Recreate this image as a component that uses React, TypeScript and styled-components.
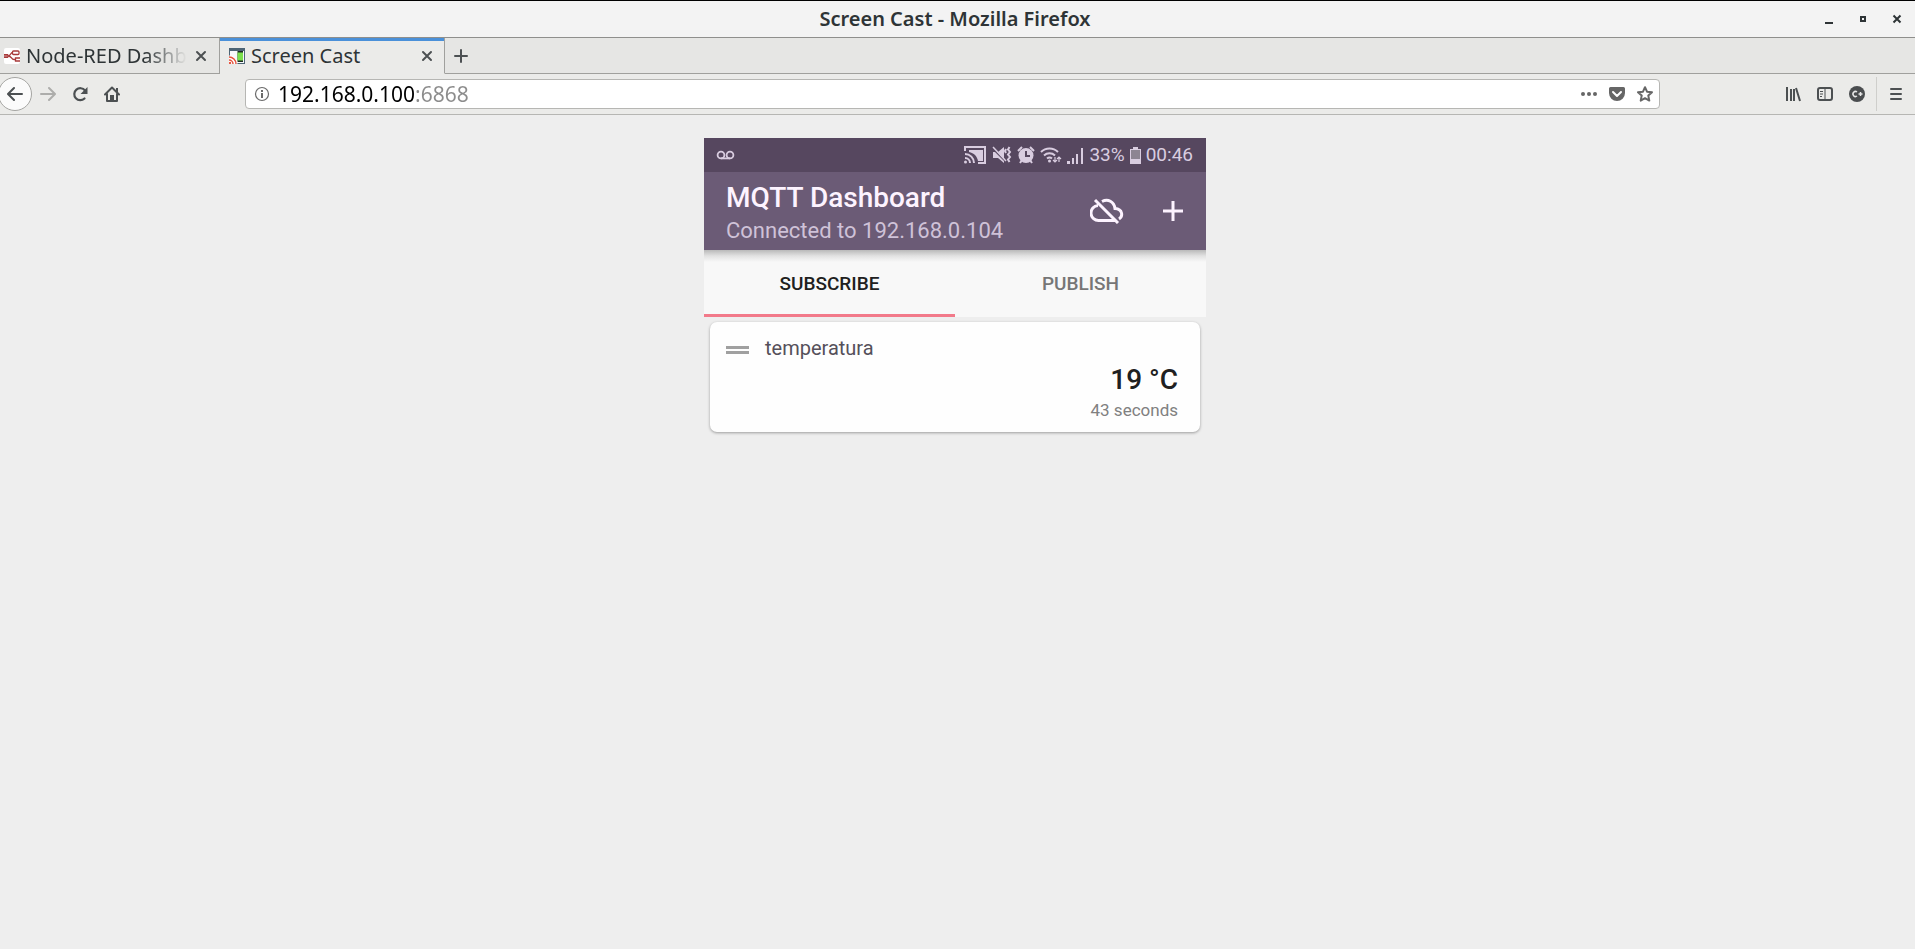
import React from "react";
import styled, { createGlobalStyle, css } from "styled-components";

const GlobalStyle = createGlobalStyle`
  *, *::before, *::after { box-sizing: border-box; }
  body { margin: 0; background: #eeeeee; }
  button, input { font: inherit; color: inherit; }
  button { padding: 0; border: 0; background: none; cursor: pointer; }
  svg { display: block; flex: none; }
`;

const Window = styled.div`
  display: flex;
  flex-direction: column;
  min-height: 100vh;
  background: #eeeeee;
  font-family: "Noto Sans", "Open Sans", sans-serif;
  color: #2e3436;
`;

const TitleBar = styled.header`
  display: grid;
  grid-template-columns: 1fr auto 1fr;
  align-items: center;
  height: 38px;
  padding: 0 10px 0 5px;
  border-top: 1px solid #000000;
  border-bottom: 1px solid #8f8f8c;
  background: #f3f3f3;
`;

const WindowTitle = styled.h1`
  grid-column: 2;
  margin: 0;
  font-size: 20px;
  line-height: 28px;
  font-weight: 600;
`;

const WindowControls = styled.div`
  display: flex;
  justify-content: flex-end;
  gap: 18px;
`;

const IconButton = styled.button<{ $size?: number }>`
  display: flex;
  flex: none;
  align-items: center;
  justify-content: center;
  width: ${({ $size = 16 }) => $size}px;
  height: ${({ $size = 16 }) => $size}px;
`;

const TabStrip = styled.div`
  display: flex;
  height: 36px;
  background: #e6e6e4;
`;

const BrowserTab = styled.div<{ $active?: boolean }>`
  display: flex;
  align-items: center;
  gap: 6px;
  width: ${({ $active }) => ($active ? 225 : 220)}px;
  padding: 0 10px 0 4px;
  border-right: 1px solid #a0a09d;
  border-bottom: 1px solid #a0a09d;
  ${({ $active }) =>
    $active &&
    css`
      padding: 0 9px 0 9px;
      border-bottom-color: transparent;
      background: #ebebe9;
      box-shadow: inset 0 3px #4a90d9;
    `}
`;

const TabLabel = styled.button<{ $fade?: boolean }>`
  flex: 1;
  min-width: 0;
  white-space: nowrap;
  text-align: left;
  font-size: 20px;
  line-height: 28px;
  ${({ $fade }) =>
    $fade &&
    css`
      mask-image: linear-gradient(to right, #000 74%, transparent 100%);
    `}
`;

const StripRest = styled.div`
  display: flex;
  flex: 1;
  align-items: center;
  padding-left: 8px;
  border-bottom: 1px solid #a0a09d;
`;

const Toolbar = styled.nav`
  display: flex;
  align-items: center;
  height: 41px;
  padding-right: 11px;
  border-bottom: 1px solid #b6b6b3;
  background: #ebebe9;
`;

const NavButtons = styled.div`
  display: flex;
  align-items: center;
  gap: 16px;
  width: 245px;
`;

const BackButton = styled(IconButton)`
  width: 34px;
  height: 34px;
  margin-left: -2px;
  margin-right: -8px;
  border: 1px solid #a5a5a2;
  border-radius: 50%;
  background: #fbfbfb;
`;

const AddressBar = styled.div`
  display: flex;
  flex: 1;
  align-items: center;
  gap: 12px;
  height: 30px;
  padding: 0 6px 0 8px;
  border: 1px solid #b6b6b3;
  border-radius: 4px;
  background: #ffffff;
`;

const AddressInput = styled.input`
  flex: 1;
  min-width: 0;
  height: 28px;
  margin-left: -4px;
  padding: 0;
  border: 0;
  outline: 0;
  background: linear-gradient(to right, #000000 138px, #8c8c8c 138px);
  background-clip: text;
  -webkit-text-fill-color: transparent;
  caret-color: #000000;
  font-size: 21px;
  line-height: 28px;
`;

const ToolButtons = styled.div`
  display: flex;
  align-items: center;
  justify-content: flex-end;
  gap: 16px;
  width: 244px;
`;

const Divider = styled.span`
  width: 1px;
  height: 34px;
  margin: 0 -5px;
  background: #cfcfcc;
`;

const Page = styled.main`
  display: flex;
  justify-content: center;
  padding: 23px 5px 0 0;
`;

const Phone = styled.section`
  width: 502px;
  font-family: Roboto, sans-serif;
`;

const StatusBar = styled.div`
  display: flex;
  align-items: center;
  gap: 5px;
  height: 34px;
  padding: 0 13px 0 12px;
  background: #56475f;
  color: #d9cde0;
  font-size: 19px;
  line-height: 24px;
`;

const StatusSpacer = styled.span`
  flex: 1;
`;

const AppBar = styled.div`
  display: flex;
  align-items: center;
  gap: 32px;
  height: 78px;
  padding: 0 16px 0 22px;
  background: #6b5b76;
`;

const AppHeading = styled.div`
  flex: 1;
  padding-top: 6px;
`;

const AppTitle = styled.h2`
  margin: 0;
  color: #fdf3ff;
  font-size: 28px;
  line-height: 34px;
  font-weight: 500;
`;

const AppSubtitle = styled.p`
  margin: 0;
  color: #cfc2d8;
  font-size: 22px;
  line-height: 32px;
`;

const Tabs = styled.div`
  display: grid;
  grid-template-columns: 1fr 1fr;
  height: 67px;
  background: linear-gradient(#b9b9b9, #e2e2e2 6px, #f8f8f8 12px);
`;

const AppTab = styled.button<{ $active?: boolean }>`
  padding-top: 4px;
  border-bottom: 3px solid ${({ $active }) => ($active ? "#f27a8a" : "transparent")};
  color: ${({ $active }) => ($active ? "#202020" : "#767676")};
  font-size: 19px;
  line-height: 24px;
  font-weight: 500;
`;

const Card = styled.article`
  display: flex;
  gap: 16px;
  margin: 5px 6px 0;
  padding: 12px 22px 9px 16px;
  height: 110px;
  border-radius: 7px;
  background: #fefefe;
  box-shadow: 0 1px 3px rgba(0, 0, 0, 0.35);
`;

const Handle = styled.span`
  flex: none;
  width: 23px;
  height: 8px;
  margin-top: 12px;
  border: solid #a0a0a0;
  border-width: 3px 0;
`;

const CardBody = styled.div`
  display: flex;
  flex: 1;
  flex-direction: column;
`;

const Topic = styled.h3`
  margin: 0;
  color: #55505a;
  font-size: 20px;
  line-height: 28px;
  font-weight: 400;
`;

const Reading = styled.strong`
  align-self: flex-end;
  color: #202020;
  font-size: 28px;
  line-height: 36px;
  font-weight: 500;
`;

const Age = styled.span`
  align-self: flex-end;
  color: #808080;
  font-size: 17px;
  line-height: 24px;
`;

const line = { fill: "none", stroke: "#4c5052", strokeWidth: 2, strokeLinecap: "round", strokeLinejoin: "round" } as const;

const CloseIcon = () => (
  <svg width="12" height="12" viewBox="0 0 12 12"><path {...line} d="M2 2l8 8M10 2l-8 8" /></svg>
);

const NodeRedIcon = () => (
  <svg width="16" height="16" viewBox="0 0 16 16" fill="none" stroke="#a83a3a">
    <rect width="16" height="16" rx="2" fill="#fff" stroke="none" />
    <path d="M0 8h4c3 0 2-3.500 5-3.500M4 8c4 0 3 3.500 6 3.500h2" strokeWidth="1.300" />
    <path d="M0 6.500h4v3H0" strokeWidth="1" />
    <rect x="8.500" y="3" width="6.500" height="3.500" rx="1" strokeWidth="1.300" />
    <path d="M16 10h-4.500v3H16" strokeWidth="1.300" />
  </svg>
);

const CastFavicon = () => (
  <svg width="16" height="16" viewBox="0 0 16 16">
    <path d="M0 0h16v16H0z" fill="#4d6475" />
    <path d="M1 3h14v12H1z" fill="#f7f9fa" />
    <path d="M8.500 3h5.500v11H8.500z" fill="#1b2a20" />
    <path d="M8.500 4.500H14v8H8.500z" fill="#7be04c" />
    <path d="M0 7.500A8.500 8.500 0 0 1 8.500 16H0z" fill="#fff" />
    <g fill="none" stroke="#e5533d" strokeWidth="1.500"><path d="M0 9a7 7 0 0 1 7 7M0 12a4 4 0 0 1 4 4" /></g>
    <circle cx="1" cy="15" r="1.200" fill="#e5533d" />
  </svg>
);

export default function App() {
  return (
    <Window>
      <GlobalStyle />
      <TitleBar>
        <WindowTitle>Screen Cast - Mozilla Firefox</WindowTitle>
        <WindowControls>
          <IconButton aria-label="Minimize"><svg width="16" height="16"><path d="M4 11h8v2H4z" fill="#2e3436" /></svg></IconButton>
          <IconButton aria-label="Maximize"><svg width="16" height="16"><path d="M6 6h4v4H6z" fill="none" stroke="#2e3436" strokeWidth="2" /></svg></IconButton>
          <IconButton aria-label="Close"><svg width="16" height="16"><path d="M4.500 4.500l7 7M11.500 4.500l-7 7" fill="none" stroke="#2e3436" strokeWidth="2" /></svg></IconButton>
        </WindowControls>
      </TitleBar>

      <TabStrip>
        <BrowserTab>
          <NodeRedIcon />
          <TabLabel $fade>Node-RED Dashb</TabLabel>
          <IconButton aria-label="Close tab"><CloseIcon /></IconButton>
        </BrowserTab>
        <BrowserTab $active>
          <CastFavicon />
          <TabLabel>Screen Cast</TabLabel>
          <IconButton aria-label="Close tab"><CloseIcon /></IconButton>
        </BrowserTab>
        <StripRest>
          <IconButton aria-label="New tab"><svg width="16" height="16"><path {...line} d="M8 2v12M2 8h12" /></svg></IconButton>
        </StripRest>
      </TabStrip>

      <Toolbar>
        <NavButtons>
          <BackButton aria-label="Back"><svg width="16" height="16"><path {...line} d="M15 8H1.500M7 2L1 8l6 6" /></svg></BackButton>
          <IconButton aria-label="Forward"><svg width="16" height="16"><path {...line} stroke="#adadab" d="M1 8h13.500M9 2l6 6-6 6" /></svg></IconButton>
          <IconButton aria-label="Reload"><svg width="16" height="16"><path {...line} strokeWidth="2.200" d="M12.500 12.500A6 6 0 1 1 13 4.500" /><path d="M15.500 1v7H8.500z" fill="#4c5052" /></svg></IconButton>
          <IconButton aria-label="Home"><svg width="16" height="16"><path {...line} d="M1 8.500L8 1.500l7 7M3 8v7h10V8" /><path d="M6 9h4v6H6z" fill="#4c5052" /><path d="M12 2h2v4h-2z" fill="#4c5052" /></svg></IconButton>
        </NavButtons>
        <AddressBar>
          <svg width="16" height="16"><circle cx="8" cy="8" r="6.500" fill="none" stroke="#6a6a6a" strokeWidth="1.200" /><path d="M7 7h2v5H7zM7 4h2v2H7z" fill="#6a6a6a" /></svg>
          <AddressInput aria-label="Address" defaultValue="192.168.0.100:6868" />
          <IconButton aria-label="Page actions"><svg width="16" height="16" fill="#666"><circle cx="2" cy="8" r="2" /><circle cx="8" cy="8" r="2" /><circle cx="14" cy="8" r="2" /></svg></IconButton>
          <IconButton aria-label="Save to Pocket"><svg width="16" height="16"><path d="M1.500 1h13A1.500 1.500 0 0 1 16 2.500V7A8 8 0 0 1 0 7V2.500A1.500 1.500 0 0 1 1.500 1z" fill="#666" /><path d="M4 6l4 4 4-4" fill="none" stroke="#fff" strokeWidth="2" strokeLinecap="round" strokeLinejoin="round" /></svg></IconButton>
          <IconButton aria-label="Bookmark"><svg width="16" height="16"><path {...line} stroke="#666" d="M8 1.200l2 4.500 5 .5-3.700 3.400 1 5L8 12.200l-4.300 2.400 1-5L1 6.200l5-.5z" /></svg></IconButton>
        </AddressBar>
        <ToolButtons>
          <IconButton aria-label="Library"><svg width="16" height="16"><path {...line} d="M2 1v14M6 3v12M9 3v12M11 2l4 13" strokeLinecap="butt" /></svg></IconButton>
          <IconButton aria-label="Sidebars"><svg width="16" height="16"><rect {...line} x="1" y="2" width="14" height="12" rx="2" /><path d="M8 3v10M3 5.500h3M3 8h3M3 10.500h2" stroke="#4c5052" /></svg></IconButton>
          <IconButton aria-label="Extension"><svg width="16" height="16"><circle cx="8" cy="8" r="8" fill="#4a4d4f" /><path d="M8 6a2.500 2.500 0 1 0 0 4M9.500 8h4M11.500 6v4" fill="none" stroke="#e8e8e8" strokeWidth="1.500" /></svg></IconButton>
          <Divider />
          <IconButton aria-label="Menu"><svg width="16" height="16"><path {...line} d="M3 3h10M3 8h10M3 13h10" /></svg></IconButton>
        </ToolButtons>
      </Toolbar>

      <Page>
        <Phone>
          <StatusBar>
            <svg width="20" height="12" fill="none" stroke="#d9cde0" strokeWidth="1.800"><circle cx="5" cy="6" r="3.400" /><circle cx="14" cy="6" r="3.400" /><path d="M5 9.400h9" /></svg>
            <StatusSpacer />
            <svg width="23" height="18" fill="none" stroke="#d9cde0" strokeWidth="2"><path d="M1 5V1h20v16h-7M1 8a9 9 0 0 1 9 9M1 12a5 5 0 0 1 5 5" /><path d="M5 4h14v11h-5c-1-5-4-8-9-9z" fill="#d9cde0" stroke="none" /><circle cx="1.500" cy="16" r="1.500" fill="#d9cde0" stroke="none" /></svg>
            <svg width="20" height="18"><path d="M1 6h5l6-5v16l-6-5H1z" fill="#d9cde0" /><path d="M0 2l14 14" stroke="#56475f" strokeWidth="1.500" /><path d="M1 1l13 14" stroke="#d9cde0" strokeWidth="1.500" /><path d="M17.500 1l-1.500 2.500 2 2.500-2 2.500 2 2.500-2 2.500 1.500 2.500M14 3l-1 2 1 2" stroke="#d9cde0" strokeWidth="2" fill="none" /></svg>
            <svg width="18" height="18"><circle cx="9" cy="9.500" r="7.500" fill="#d9cde0" /><path d="M1 5l4-4M17 5l-4-4M3 17l2-3M15 17l-2-3" stroke="#d9cde0" strokeWidth="2" /><path d="M9 5v5h4" stroke="#56475f" strokeWidth="2" fill="none" /></svg>
            <svg width="22" height="18" fill="none" stroke="#d9cde0" strokeWidth="2"><path d="M1 6a12 12 0 0 1 17 0M4 9.500a8 8 0 0 1 11 0M7 12.500a4 4 0 0 1 5 0" /><circle cx="9.500" cy="15" r="1.500" fill="#d9cde0" stroke="none" /><path d="M15 11v5M19 11v5M13 14l2 2 2-2M17 13l2-2 2 2" strokeWidth="1.200" /></svg>
            <svg width="17" height="17" fill="#d9cde0"><path d="M0 14h3v3H0zM5 11h2v6H5zM9 7h2v10H9zM14 1h2v16h-2z" /></svg>
            <span>33%</span>
            <svg width="11" height="17"><path d="M3 0h5v2h3v15H0V2h3z" fill="#d9cde0" /><path d="M1 3h9v9H1z" fill="#8d8592" /></svg>
            <span>00:46</span>
          </StatusBar>
          <AppBar>
            <AppHeading>
              <AppTitle>MQTT Dashboard</AppTitle>
              <AppSubtitle>Connected to 192.168.0.104</AppSubtitle>
            </AppHeading>
            <IconButton $size={34} aria-label="Disconnect">
              <svg width="34" height="26" viewBox="0 0 34 26" fill="none" stroke="#fdf3ff" strokeWidth="3"><path d="M8 7.500a7.500 7.500 0 0 0 1 15h17M12 3.500c6-3 12 0 13 7 8 .5 8 8 4 10.500M5 2l23 23" /></svg>
            </IconButton>
            <IconButton $size={34} aria-label="Add">
              <svg width="20" height="20"><path d="M10 0v20M0 10h20" stroke="#fdf3ff" strokeWidth="3" /></svg>
            </IconButton>
          </AppBar>
          <Tabs role="tablist">
            <AppTab role="tab" aria-selected="true" $active>SUBSCRIBE</AppTab>
            <AppTab role="tab" aria-selected="false">PUBLISH</AppTab>
          </Tabs>
          <Card>
            <Handle />
            <CardBody>
              <Topic>temperatura</Topic>
              <Reading>19 °C</Reading>
              <Age>43 seconds</Age>
            </CardBody>
          </Card>
        </Phone>
      </Page>
    </Window>
  );
}
